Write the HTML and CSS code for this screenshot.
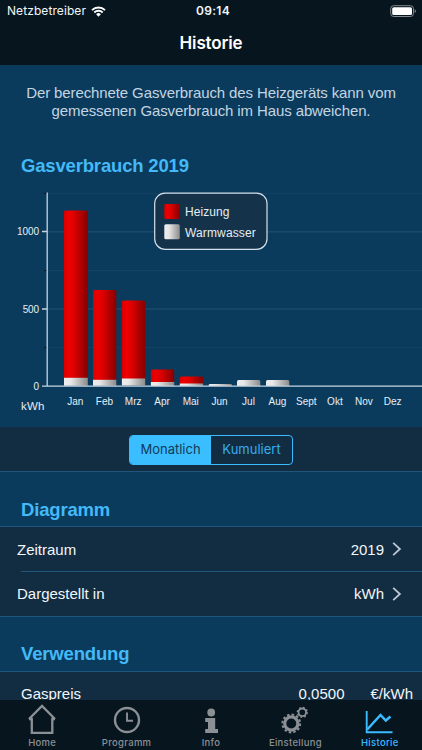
FILE: index.html
```html
<!DOCTYPE html>
<html lang="de">
<head>
  <meta charset="UTF-8" />
  <meta name="viewport" content="width=device-width, initial-scale=1" />
  <title>Historie</title>
  <link rel="stylesheet" href="styles.css">
</head>
<body>
  <header class="topbar">
    <div class="status">
      <div class="carrier">
        <span>Netzbetreiber</span>
        <svg class="wifi" width="15" height="11" viewBox="0 0 15 11">
          <path d="M1 4.1a9.3 9.3 0 0 1 13 0M3.3 6.5a6 6 0 0 1 8.4 0" fill="none" stroke="#fff" stroke-width="1.9"/>
          <path d="M7.5 10.8 5.1 8.3a3.4 3.4 0 0 1 4.8 0z" fill="#fff"/>
        </svg>
      </div>
      <div class="clock">09:14</div>
      <svg class="battery" width="27" height="13" viewBox="0 0 27 13">
        <rect x=".7" y=".7" width="22.8" height="10.8" rx="3" fill="none" stroke="#84898e"/>
        <rect x="2.2" y="2.2" width="19.8" height="7.8" rx="1.6" fill="#fff"/>
        <path d="M24.7 4.2c1.7.7 1.7 3.1 0 3.8z" fill="#84898e"/>
      </svg>
    </div>
    <h1>Historie</h1>
  </header>

  <main>
    <p class="hint">Der berechnete Gasverbrauch des Heizgeräts kann vom<br>gemessenen Gasverbrauch im Haus abweichen.</p>
    <h2 class="chart-title">Gasverbrauch 2019</h2>

    <svg class="chart" width="422" height="242" viewBox="0 185 422 242">
      <defs>
        <linearGradient id="red">
          <stop offset="0" stop-color="#d80000"/>
          <stop offset=".2" stop-color="#ee0000"/>
          <stop offset=".4" stop-color="#df0000"/>
          <stop offset="1" stop-color="#860000"/>
        </linearGradient>
        <linearGradient id="white">
          <stop offset="0" stop-color="#eeeeee"/>
          <stop offset=".3" stop-color="#e7e7e7"/>
          <stop offset="1" stop-color="#8b8b8b"/>
        </linearGradient>
      </defs>

      <!-- grid -->
      <g class="grid">
        <path d="M48 193.3H422M48 270.5H422M48 347.6H422" stroke-opacity=".5"/>
        <path d="M48 231.8H422M48 309H422" stroke-width="1.4"/>
      </g>
      <path d="M44 193.3h3M44 270.5h3M44 347.6h3" stroke="#051522"/>

      <!-- Heizung -->
      <g fill="url(#red)">
        <path d="M64 378V212q0-1.5 1.5-1.5h20.8q1.5 0 1.5 1.5V378z"/>
        <path d="M93 380V291.5q0-1.5 1.5-1.5h20.3q1.5 0 1.5 1.5V380z"/>
        <path d="M121.9 379V302q0-1.5 1.5-1.5h20.3q1.5 0 1.5 1.5V379z"/>
        <path d="M150.9 382V371q0-1.5 1.5-1.5h20.3q1.5 0 1.5 1.5V382z"/>
        <path d="M179.8 384V378q0-1.5 1.5-1.5h20.3q1.5 0 1.5 1.5V384z"/>
      </g>
      <!-- Warmwasser -->
      <g fill="url(#white)">
        <rect x="64" y="377.8" width="23.8" height="8"/>
        <rect x="93" y="379.8" width="23.3" height="6"/>
        <rect x="121.9" y="378.5" width="23.3" height="7"/>
        <rect x="150.9" y="382" width="23.3" height="4"/>
        <rect x="179.8" y="383.5" width="23.3" height="2.5"/>
        <path d="M208.7 386v-1q0-1 1.5-1h20.3q1.5 0 1.5 1v1z"/>
        <path d="M237 386v-4.5q0-1.5 1.5-1.5h20.3q1.5 0 1.5 1.5v4.5z"/>
        <path d="M266 386v-4.5q0-1.5 1.5-1.5h20.3q1.5 0 1.5 1.5v4.5z"/>
      </g>

      <path class="axis" d="M47.2 192.5V386.2M42 231.5h5M42 309h5M42 386.2H422"/>

      <g class="scale">
        <text x="17" y="235.3" textLength="22">1000</text>
        <text x="22.7" y="312.6" textLength="16.3">500</text>
        <text x="33.6" y="389.8">0</text>
      </g>
      <text class="unit" x="21" y="409.7" textLength="23.3">kWh</text>
      <g class="months">
        <text x="75.3" y="405">Jan</text>
        <text x="104.4" y="405">Feb</text>
        <text x="133.2" y="405">Mrz</text>
        <text x="162.1" y="405">Apr</text>
        <text x="190.7" y="405">Mai</text>
        <text x="219.5" y="405">Jun</text>
        <text x="248.5" y="405">Jul</text>
        <text x="277.4" y="405">Aug</text>
        <text x="306.3" y="405">Sept</text>
        <text x="334.9" y="405">Okt</text>
        <text x="363.9" y="405">Nov</text>
        <text x="392.7" y="405">Dez</text>
      </g>

      <!-- legend -->
      <rect class="legend-box" x="154.7" y="193.1" width="112.3" height="56.2" rx="10.5"/>
      <rect x="164.3" y="204" width="15.5" height="15" rx="1.5" fill="url(#red)"/>
      <rect x="164.3" y="224.3" width="15.5" height="15" rx="1.5" fill="url(#white)"/>
      <g class="legend-text">
        <text x="185" y="215.9" textLength="44.5">Heizung</text>
        <text x="185" y="236.5" textLength="70.8">Warmwasser</text>
      </g>
    </svg>

    <div class="switch-bar">
      <div class="switch">
        <span class="on">Monatlich</span>
        <span>Kumuliert</span>
      </div>
    </div>

    <h2 class="section">Diagramm</h2>
    <div class="rows">
      <div class="row">
        <span class="label">Zeitraum</span>
        <span class="value">2019</span>
        <svg class="chevron" width="10" height="16" viewBox="0 0 10 16"><path d="M1.2 1.9 7.9 8 1.2 14.1"/></svg>
      </div>
      <div class="row">
        <span class="label">Dargestellt in</span>
        <span class="value">kWh</span>
        <svg class="chevron" width="10" height="16" viewBox="0 0 10 16"><path d="M1.2 1.9 7.9 8 1.2 14.1"/></svg>
      </div>
    </div>

    <h2 class="section usage">Verwendung</h2>
    <div class="price">
      <span class="price-name">Gaspreis</span>
      <span class="price-value">0,0500</span>
      <span class="price-unit">€/kWh</span>
    </div>
  </main>

  <nav class="tabs">
    <div class="tab">
      <svg width="32" height="32" viewBox="0 0 32 32"><path d="M3 17 16 4 29 17M3 17H5.8V31H26.3V17H29" fill="none" stroke="currentColor" stroke-width="2.3"/></svg>
      <span>Home</span>
    </div>
    <div class="tab">
      <svg width="32" height="32" viewBox="0 0 32 32"><circle cx="16" cy="18" r="12" fill="none" stroke="currentColor" stroke-width="2.4"/><path d="M16 10.5v8.3h6" fill="none" stroke="currentColor" stroke-width="1.9"/></svg>
      <span>Programm</span>
    </div>
    <div class="tab">
      <svg width="32" height="32" viewBox="0 0 32 32"><circle cx="16.2" cy="10.5" r="3.9" fill="currentColor"/><path d="M10.2 16H20.2V27H23V31H10.2V27H13V20H10.2z" fill="currentColor"/></svg>
      <span>Info</span>
    </div>
    <div class="tab">
      <svg width="32" height="32" viewBox="0 0 32 32">
        <g fill="none" stroke="currentColor">
          <circle cx="12.3" cy="21.5" r="6.6" stroke-width="3.2"/>
          <circle cx="12.3" cy="21.5" r="8.9" stroke-width="2" stroke-dasharray="2.5 2.16"/>
          <circle cx="23.3" cy="10.3" r="3.8" stroke-width="1.9"/>
          <circle cx="23.3" cy="10.3" r="5" stroke-width="1.3" stroke-dasharray="1.8 2.127"/>
        </g>
      </svg>
      <span>Einstellung</span>
    </div>
    <div class="tab active">
      <svg width="32" height="32" viewBox="0 0 32 32">
        <path d="M2.7 9V30.2H28.5" fill="none" stroke="currentColor" stroke-width="1.9"/>
        <path d="M3.2 27.5 16.5 13 21.8 18.5 26.5 14.5" fill="none" stroke="currentColor" stroke-width="2.5"/>
      </svg>
      <span>Historie</span>
    </div>
  </nav>
</body>
</html>
```

FILE: styles.css
```css
* { box-sizing: border-box; }
body {
  margin: 0;
  width: 422px;
  height: 750px;
  overflow: hidden;
  display: flex;
  flex-direction: column;
  background: #0b3b5c;
  color: #f2f7fa;
  font-family: "Liberation Sans", Arial, sans-serif;
}
h1, h2, p { margin: 0; }
svg { display: block; flex: none; }
span { white-space: nowrap; }

.topbar { height: 65px; flex: none; background: #07151f; }
.status {
  height: 22px;
  padding: 0 5px 0 7px;
  display: grid;
  grid-template-columns: 1fr auto 1fr;
  align-items: center;
  font: 12px/22px Inter, sans-serif;
}
.carrier { display: flex; align-items: center; gap: 5px; letter-spacing: .08px; }
.clock { padding-left: 2px; font-weight: 600; letter-spacing: .3px; }
.battery { justify-self: end; }
h1 { font: 600 17px/42px Inter, sans-serif; text-align: center; letter-spacing: -.15px; color: #fff; }

main { flex: 1; min-height: 0; overflow: hidden; }
.hint {
  height: 86px;
  padding-top: 19px;
  text-align: center;
  font-size: 15px;
  line-height: 18px;
  letter-spacing: -.11px;
  color: #c3d5e1;
}
h2 { color: #43b9f8; font-size: 18.5px; font-weight: bold; letter-spacing: -.17px; }
.chart-title { height: 34px; padding-left: 21px; line-height: 30px; }

.grid { stroke: #1c4a6a; fill: none; }
.axis { stroke: #c3d4e2; stroke-width: 1.3; fill: none; }
.chart text { fill: #e6eef4; }
.scale { font-size: 10px; }
.unit { font-size: 11.5px; }
.months { font-size: 10px; text-anchor: middle; }
.legend-box { fill: #14334a; stroke: #d5e0ea; stroke-width: 1.2; }
.legend-text { font-size: 12px; }

.switch-bar {
  height: 45px;
  padding-top: 8px;
  background: #122c42;
  border-bottom: 1px solid #1f567c;
}
.switch {
  width: 164px;
  height: 30px;
  margin: 0 auto;
  display: flex;
  border: 1px solid #3bbcff;
  border-radius: 4px;
  overflow: hidden;
  font: 13px/27px Inter, sans-serif;
  color: #36aeec;
}
.switch span { flex: 1; text-align: center; }
.switch .on { background: #3bbeff; color: #103a57; }

.section { height: 54px; padding: 22px 0 0 21px; line-height: 32px; }
.rows { border-top: 1px solid #1f567c; border-bottom: 1px solid #1f567c; background: #122c42; }
.row {
  height: 44px;
  padding: 0 20px 0 17px;
  display: flex;
  align-items: center;
  font-size: 15px;
}
.row + .row {
  height: 45px;
  background: linear-gradient(#1f567c, #1f567c) 21px 0 / 100% 1px no-repeat;
}
.label { flex: 1; }
.value { margin-right: 8px; }
.chevron path { fill: none; stroke: #bdc9d4; stroke-width: 1.8; }
.usage { padding-top: 21px; }
.price {
  height: 45px;
  padding: 0 9px 0 21px;
  display: flex;
  line-height: 43px;
  border-top: 1px solid #1f567c;
  background: #122c42;
  font-size: 15px;
}
.price-name { flex: 1; }
.price-value { margin-right: 26px; }

.tabs {
  height: 50px;
  flex: none;
  display: flex;
  background: #07151f;
  color: #8b9094;
}
.tab {
  flex: 1;
  padding-top: 2px;
  display: flex;
  flex-direction: column;
  align-items: center;
  font: 500 9.5px/14px Inter, sans-serif;
  letter-spacing: .3px;
}
.tab span { margin-top: 2px; }
.active { color: #3bbcff; }
```
